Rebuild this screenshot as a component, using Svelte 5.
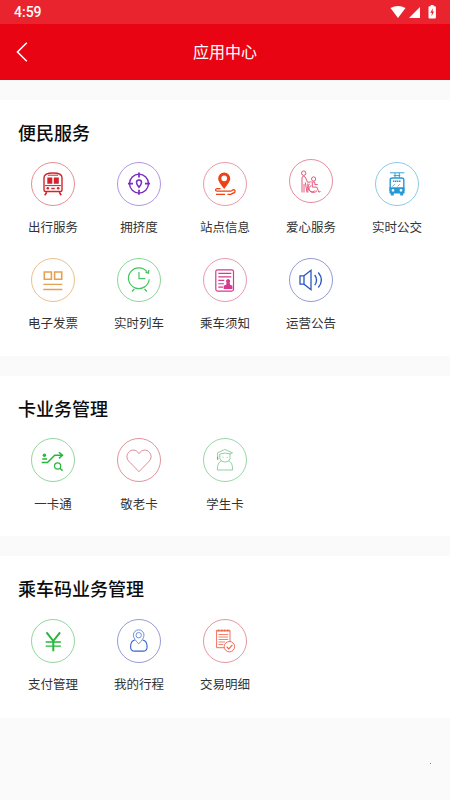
<script>
  const train = `<path d="M13 28V15.500q0-4.500 9-4.500t9 4.500V28q0 1.500-1.500 1.500h-15Q13 29.500 13 28Z" stroke-width="1.400"/><path d="M16.300 15.600h5v6.100h-5zM22.800 15.600h5v6.100h-5z" fill="currentColor" stroke="none"/><path d="M17 13.200h10M14 23.600h16" stroke-width="1"/><circle cx="16.800" cy="26.300" r="1.300" fill="currentColor" stroke="none"/><circle cx="27.200" cy="26.300" r="1.300" fill="currentColor" stroke="none"/><path d="M20.300 26.500h3.400M15.700 30.300l-1.900 2.900M28.300 30.300l1.900 2.900" stroke-width="1.600"/>`;
  const crowd = `<circle cx="22" cy="21.600" r="9.500" stroke-width="1.400"/><path d="M22 10.500v5M22 27.700v5M11 21.600h5M28 21.600h5" stroke-width="1.700"/><path d="M22 25.200c-1.800-2.200-2.500-3.300-2.500-4.700a2.500 2.500 0 0 1 5 0c0 1.400-.7 2.500-2.500 4.700Z" stroke-width="1.500"/>`;
  const station = `<path fill-rule="evenodd" d="M21.200 27c-3.600-5-6-7.400-6-10.500a6 6 0 0 1 12 0c0 3.100-2.400 5.500-6 10.500Zm0-13.600a2.900 2.900 0 1 0 0 5.800 2.900 2.900 0 0 0 0-5.800Z" fill="currentColor" stroke="none"/><path d="M17.500 26.600h-3.300c-2.200.3-2.200 2.500 0 2.600h13.500c1.300 0 1.500-1.500 2.800-1.600 2.100 0 2.100 3 0 3.400-1.300.2-1.500 1.300-3 1.300h-3M13 32.400h9" stroke-width="1.300"/>`;
  const care = `<circle cx="14.700" cy="14.200" r="2.200"/><path d="M13 33.500V19q0-1.700 1.700-1.700 1.300 0 2 1.700l1.900 4.300 4-.5M16.300 23.500l1.700 10M15 25v8.500M18.800 24.500v9"/><circle cx="24.600" cy="20" r="2.100"/><path d="M23.300 23.200v4.900h4.500l2 5 1.700-.6M23.300 23h2.500v2.600h3M20.500 24.800a5 5 0 1 0 7.500 7M22.300 26.600a3.200 3.200 0 1 0 3.700 4.700"/>`;
  const bus = `<path d="M15 10.800h14.400M18.700 13.600h6.600M20 10.800v5M24.300 10.800v5" stroke-width=".9"/><path d="M15.200 29V18q0-2 2-2h9.600q2 0 2 2v11" stroke-width="1.400"/><path d="M18 19.200h8" stroke-width="1.500" stroke-dasharray="1.500 .5"/><path d="M17.500 24.500l2.200-2.200M22.500 24.500l2.200-2.200" stroke-width=".8"/><path fill-rule="evenodd" d="M14.500 25.300h15v6.200h-1.300v2h-3v-2h-6.400v2h-3v-2h-1.300Zm3.500 1.600a1.400 1.400 0 1 0 0 2.800 1.400 1.400 0 0 0 0-2.800Zm8 0a1.400 1.400 0 1 0 0 2.800 1.400 1.400 0 0 0 0-2.800Z" fill="currentColor" stroke="none"/>`;
  const invoice = `<path d="M13.300 14h7.100v7.300h-7.100zM23.600 14h7.100v7.300h-7.100z" stroke-width="1.600"/><path d="M12.300 26.300h19M12.300 31.500h19" stroke-width="1.300"/>`;
  const clock = `<path d="M30.200 14A10.400 10.400 0 1 0 32.200 21.300" stroke-width="1.200"/><path d="M22 14v6.700h6.300" stroke-width="1.200"/><path d="M28.500 14.300l2.900.8.4-2.900M17.300 30.900l-2.300 2.600M27.500 30.900l2.300 2.600" stroke-width="1.400"/>`;
  const notice = `<rect x="12.800" y="11.800" width="17.700" height="21.300" rx="1.800" stroke-width="1.200"/><path d="M15.300 15.400h13M15.300 18.900h13M15.300 22.400h6M15.300 25.800h5.600M15.300 29.100h4.800" stroke-width="1.100"/><path d="M25.100 20.900a2.200 2.200 0 0 1 1.500 3.700l.5 2.200 2.300.9v3.400h-8.700v-3.400l2.400-.9.500-2.200a2.200 2.200 0 0 1 1.500-3.700Z" fill="currentColor" stroke="none"/>`;
  const speaker = `<path d="M15 17.800 22 12.300v19.400l-7-5.500h-4v-8.400ZM15 17.800v8.400M25.700 17q3.700 5 0 10.200M29.300 14.500q6.200 7.500 0 15" stroke-width="1.300"/>`;
  const transfer = `<circle cx="13.400" cy="17.200" r="1.700" fill="currentColor" stroke="none"/><path d="M11.300 21h4.700M10.700 24.600h5.800l7.200-7.300h7.500M28 14.200l3.500 3.100-3.500 3.100" stroke-width="1.500"/><circle cx="26.600" cy="28" r="3.100" stroke-width="1.200"/><path d="m28.900 30.300 2.700 2.300" stroke-width="1.400"/>`;
  const heart = `<path d="M22 33.700 11.800 23.200a6.400 6.400 0 0 1-.3-8.800c2.800-3.500 8-3.100 10.500 1.300 2.500-4.400 7.700-4.800 10.500-1.300a6.400 6.400 0 0 1-.3 8.800Z" stroke-width=".8"/>`;
  const student = `<path d="M14.500 14.800 21.900 11.500l7.600 3.300-2.500 1.100q-5-2-10.200.2v4.500q.8 3.400 5.200 3.500 4.400-.1 5-3.500v-4.700M14.600 15v3.500M18.400 22.900c-2.700 1.200-4.100 4-4 9.100h15.200c.1-5.100-1.300-7.900-4-9.100M19.500 19.300h1M23.700 19.300h1" stroke-width=".7"/><path d="M14.600 18.500v3.300" stroke-width="1.300"/>`;
  const yen = `<path d="m15.500 13.400 6.800 8.600 6.800-8.600M22.300 22v10.300" stroke-width="2"/><path d="M14.700 23h15.200M14.700 27.100h15.200" stroke-width="1.400"/>`;
  const trip = `<path d="M21.700 24.900c-3.200-3.500-5.300-5.900-5.300-8.800a5.300 5.300 0 0 1 10.600 0c0 2.900-2.100 5.300-5.300 8.800Z" stroke-width=".7"/><circle cx="21.700" cy="16.200" r="2.700" stroke-width=".7"/><path d="M17.800 21c-2.600.5-4.200 3.200-4.200 6.900 0 3.200 1.400 4.200 4.200 4.200h8c2.900 0 4.300-1 4.300-4.200 0-3.700-1.700-6.400-4.400-6.900" stroke-width="1.100"/>`;
  const detail = `<path d="M21 28.700h-7.400V11.300H27v11.500" stroke-width=".9"/><path d="M13.600 12h13.400M15.700 10.500v2M18.700 10.500v2M21.700 10.500v2M24.700 10.500v2" stroke-width=".8"/><path d="M15.500 15.500h9.700M15.500 18h9.700M15.500 20.500h9.700M15.500 23h6.500M15.500 25.500h4.700" stroke-width=".8"/><circle cx="26.400" cy="27.700" r="5.200" stroke-width=".9"/><path d="m23.600 27.700 2.200 2.200 3.600-4" stroke-width="1.100"/>`;

  const sections = [
    { title: '便民服务', size: 'tall', items: [
      { label: '出行服务', color: '#d3242b', ring: '#dc6a70', art: train },
      { label: '拥挤度', color: '#7a2cc0', ring: '#9a70d8', art: crowd },
      { label: '站点信息', color: '#ee4215', ring: '#e0788a', art: station },
      { label: '爱心服务', color: '#e2587c', ring: '#dc6580', art: care, raised: true },
      { label: '实时公交', color: '#2599d5', ring: '#68b8dc', art: bus },
      { label: '电子发票', color: '#e5a052', ring: '#e3ab68', art: invoice },
      { label: '实时列车', color: '#43c660', ring: '#66c878', art: clock },
      { label: '乘车须知', color: '#d8398e', ring: '#df7893', art: notice },
      { label: '运营公告', color: '#2954c5', ring: '#7379c8', art: speaker }
    ] },
    { title: '卡业务管理', size: 'card', items: [
      { label: '一卡通', color: '#25b83b', ring: '#70c780', art: transfer },
      { label: '敬老卡', color: '#d66f7c', ring: '#d66f7c', art: heart },
      { label: '学生卡', color: '#62bd7b', ring: '#75c88a', art: student }
    ] },
    { title: '乘车码业务管理', size: 'ride', items: [
      { label: '支付管理', color: '#25b83b', ring: '#70c780', art: yen },
      { label: '我的行程', color: '#3563ca', ring: '#7379c8', art: trip },
      { label: '交易明细', color: '#ec6249', ring: '#dd7380', art: detail }
    ] }
  ];
</script>

<main>
  <div class="status">
    <span>4:59</span>
    <svg width="48" height="16" viewBox="0 0 48 16" fill="#fff">
      <path d="M.5 4Q8 0 15.500 4L8 14Z" />
      <path d="M19 14h11V3Z" />
      <path fill-rule="evenodd" d="M39.500 2.200h1.200V1h3v1.200h1.200q1 0 1 1v10.400q0 1-1 1h-5.400q-1 0-1-1V3.200q0-1 1-1Zm3.400 2.100-2.600 4.400h1.600l-.4 3.600 2.600-4.700h-1.600Z" />
    </svg>
  </div>
  <header>
    <svg class="back" width="12" height="20" viewBox="0 0 12 20" fill="none" stroke="#fff" stroke-width="1.600"><path d="M10.800.8 1.500 10l9.300 9.200" /></svg>
    <h1>应用中心</h1>
  </header>

  {#each sections as section}
    <section class={section.size}>
      <h2>{section.title}</h2>
      <div class="grid">
        {#each section.items as item}
          <div class="item">
            <svg class="icon" class:raised={item.raised} viewBox="0 0 44 44" fill="none" stroke="currentColor" style:color={item.color}>
              <circle cx="22" cy="22" r="21.500" stroke={item.ring} stroke-width=".75" />
              {@html item.art}
            </svg>
            <span>{item.label}</span>
          </div>
        {/each}
      </div>
    </section>
  {/each}
  <i class="dot"></i>
</main>

<style>
  :global(body) { margin: 0; }
  main {
    position: relative;
    box-sizing: border-box;
    height: 800px;
    overflow: hidden;
    background: #fafafa;
    color: #333;
    font-family: "Noto Sans CJK SC", sans-serif;
  }
  .status {
    box-sizing: border-box;
    height: 24px;
    padding: 0 12px 0 14px;
    display: flex;
    align-items: center;
    justify-content: space-between;
    background: #e9242e;
    color: #fff;
    font: 500 14px/24px Roboto, sans-serif;
  }
  .status svg { margin-bottom: 1px; }
  header {
    box-sizing: border-box;
    height: 56px;
    margin-bottom: 20px;
    padding-bottom: 2px;
    display: flex;
    align-items: center;
    justify-content: center;
    background: #e90413;
  }
  .back { position: absolute; left: 16px; top: 42px; }
  h1 { margin: 0; color: #fff; font-size: 16px; font-weight: 400; line-height: 24px; }
  section {
    box-sizing: border-box;
    margin-bottom: 20px;
    padding: 19px 10px 0;
    background: #fff;
  }
  .tall { height: 256px; }
  .card { height: 160px; }
  .ride { height: 162px; }
  h2 {
    margin: 0 8px 17px;
    color: #0c0c0c;
    font-size: 18px;
    font-weight: 500;
    line-height: 26px;
  }
  .ride h2 { margin-bottom: 18px; }
  .grid { display: grid; grid-template-columns: repeat(5, 86px); grid-auto-rows: 96px; }
  .item { display: flex; flex-direction: column; align-items: center; }
  .icon { width: 44px; height: 44px; flex: none; }
  .raised { margin-top: -3px; margin-bottom: 3px; }
  .item span { margin-top: 11px; font-size: 12.500px; line-height: 20px; white-space: nowrap; }
  .card .item span { margin-top: 12px; }
  .dot { position: absolute; left: 430px; top: 763px; width: 1px; height: 1px; background: #888; }
</style>
